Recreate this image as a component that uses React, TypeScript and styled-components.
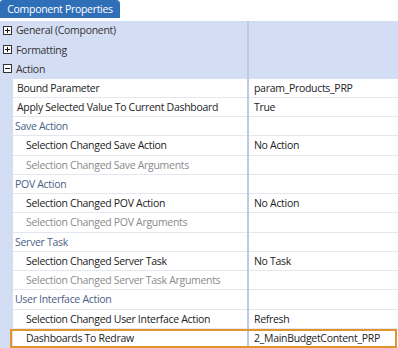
import React from 'react';
import styled, { createGlobalStyle } from 'styled-components';

const Global = createGlobalStyle`
  html, body { margin: 0; padding: 0; background: #ffffff; }
  body {
    font-family: "Open Sans", "Noto Sans", sans-serif;
    font-size: 10.5px;
    letter-spacing: -0.3px;
    color: #222;
  }
`;

const Wrap = styled.div`
  width: 398px;
  height: 348px;
  overflow: hidden;
  display: flex;
  flex-direction: column;
`;

const Tab = styled.div`
  align-self: flex-start;
  width: 120px;
  height: 18px;
  background: #2f6fb8;
  color: #fff;
  border-radius: 3px 4px 0 0;
  display: flex;
  align-items: center;
  justify-content: center;
`;

const Panel = styled.div`
  margin-top: 3px;
  background: #d3def4;
  flex: 1;
  display: flex;
  flex-direction: column;
`;

const GroupRow = styled.div`
  display: grid;
  grid-template-columns: 247px 2px 1fr;
  height: 19.25px;
  flex-shrink: 0;
`;

const GroupLabel = styled.div`
  display: flex;
  align-items: center;
  gap: 4px;
  padding-left: 3px;
  color: #333;
`;

const Divider = styled.div`
  background: #bccae3;
`;

const PropRow = styled.div<{ $marked?: boolean }>`
  position: relative;
  display: grid;
  grid-template-columns: 13px 234px 2px 1fr;
  height: 19.25px;
  flex-shrink: 0;
  ${p => p.$marked && `
    &::after {
      content: '';
      position: absolute;
      left: 10px;
      right: 1px;
      top: 0;
      bottom: 0;
      border: 2px solid #e0952f;
      pointer-events: none;
    }
  `}
`;

const Cell = styled.div<{ $indent?: number; $tone?: 'normal' | 'muted' | 'category' }>`
  background: #fff;
  border-bottom: 1px solid #e2e7f0;
  display: flex;
  align-items: center;
  white-space: nowrap;
  overflow: hidden;
  padding-left: ${p => p.$indent ?? 4}px;
  color: ${p => (p.$tone === 'muted' ? '#8a8a8a' : p.$tone === 'category' ? '#4a5f85' : '#222')};
`;

const Box = ({ open }: { open?: boolean }) => (
  <svg width="9" height="9" viewBox="0 0 9 9">
    <rect x="0.5" y="0.5" width="8" height="8" fill="#fff" stroke="#333" />
    <rect x="2" y="4" width="5" height="1" fill="#111" />
    {!open && <rect x="4" y="2" width="1" height="5" fill="#111" />}
  </svg>
);

type Prop = { name: string; value?: string; kind: 'prop' | 'sub' | 'muted' | 'category'; marked?: boolean };

const props: Prop[] = [
  { name: 'Bound Parameter', value: 'param_Products_PRP', kind: 'prop' },
  { name: 'Apply Selected Value To Current Dashboard', value: 'True', kind: 'prop' },
  { name: 'Save Action', kind: 'category' },
  { name: 'Selection Changed Save Action', value: 'No Action', kind: 'sub' },
  { name: 'Selection Changed Save Arguments', kind: 'muted' },
  { name: 'POV Action', kind: 'category' },
  { name: 'Selection Changed POV Action', value: 'No Action', kind: 'sub' },
  { name: 'Selection Changed POV Arguments', kind: 'muted' },
  { name: 'Server Task', kind: 'category' },
  { name: 'Selection Changed Server Task', value: 'No Task', kind: 'sub' },
  { name: 'Selection Changed Server Task Arguments', kind: 'muted' },
  { name: 'User Interface Action', kind: 'category' },
  { name: 'Selection Changed User Interface Action', value: 'Refresh', kind: 'sub' },
  { name: 'Dashboards To Redraw', value: '2_MainBudgetContent_PRP', kind: 'sub', marked: true },
];

const indentFor = (k: Prop['kind']) => (k === 'category' ? 2 : k === 'prop' ? 4 : 13);

export default function App() {
  return (
    <Wrap>
      <Global />
      <Tab>Component Properties</Tab>
      <Panel>
        <GroupRow>
          <GroupLabel><Box />General (Component)</GroupLabel>
          <Divider />
          <div />
        </GroupRow>
        <GroupRow>
          <GroupLabel><Box />Formatting</GroupLabel>
          <Divider />
          <div />
        </GroupRow>
        <GroupRow>
          <GroupLabel><Box open />Action</GroupLabel>
          <Divider />
          <div />
        </GroupRow>
        {props.map(p => (
          <PropRow key={p.name} $marked={p.marked}>
            <div />
            <Cell $indent={indentFor(p.kind)} $tone={p.kind === 'muted' ? 'muted' : p.kind === 'category' ? 'category' : 'normal'}>
              {p.name}
            </Cell>
            <Divider />
            <Cell $indent={5}>{p.value ?? ''}</Cell>
          </PropRow>
        ))}
      </Panel>
    </Wrap>
  );
}
